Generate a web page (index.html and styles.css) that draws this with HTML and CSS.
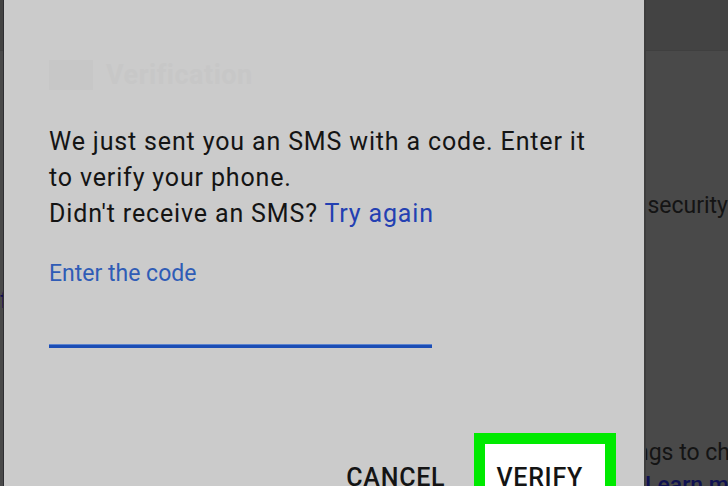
FILE: index.html
```html
<!DOCTYPE html>
<html>
<head>
<meta charset="utf-8">
<link rel="stylesheet" href="styles.css">
</head>
<body>
<div class="screen">
  <div class="bg-page">
    <div class="bg-appbar"></div>
    <div class="bg-content">
      <p class="bg-line bg-l1">Turn on 2-Step Verification to add security</p>
      <p class="bg-line bg-l2 bg-link">Verify</p>
      <p class="bg-line bg-l3">Check your settings to check</p>
      <p class="bg-line bg-l4 bg-link">Learn more</p>
    </div>
  </div>
  <div class="dialog">
    <div class="logo">
      <span class="logo-box"></span>
      <span class="logo-text">Verification</span>
    </div>
    <p class="message">We just sent you an SMS with a code. Enter it to verify your phone.<br>Didn't receive an SMS? <a class="link">Try again</a></p>
    <div class="field">
      <label class="field-label">Enter the code</label>
      <div class="field-line"></div>
    </div>
    <div class="actions">
      <span class="btn">CANCEL</span>
      <span class="btn btn-verify">VERIFY</span>
    </div>
  </div>
</div>
</body>
</html>
```
FILE: styles.css
```css
* { box-sizing: border-box; }
html, body {
  margin: 0;
  padding: 0;
  width: 728px;
  height: 486px;
  overflow: hidden;
  background: #4a4a4a;
  font-family: Roboto, "Liberation Sans", sans-serif;
}
.screen {
  position: relative;
  width: 728px;
  height: 486px;
  overflow: hidden;
}
.bg-page {
  width: 728px;
  height: 486px;
  background: #494949;
  display: flex;
  flex-direction: column;
}
.bg-appbar {
  height: 51px;
  background: #434343;
  border-bottom: 1px solid #3f3f3f;
  flex: none;
}
.bg-content {
  display: flex;
  flex-direction: column;
  padding-top: 141px;
}
.bg-line {
  margin: 0;
  font-size: 23px;
  line-height: 28px;
  color: #141414;
  white-space: nowrap;
}
.bg-l1 { text-align: right; }
.bg-l2 { margin-top: 67px; margin-left: -40px; }
.bg-l3 { margin-top: 124px; margin-left: 472px; }
.bg-l4 { margin-top: 5px; margin-left: 645px; font-weight: 500; }
.bg-link { color: #0f1150; }

.dialog {
  position: absolute;
  left: 3px;
  top: -10px;
  width: 643px;
  height: 520px;
  background: #cbcbcb;
  border-left: 1px solid #2e2e32;
  border-right: 2px solid #3e3e3e;
  padding: 70px 0 0 45px;
  display: flex;
  flex-direction: column;
}
.logo {
  display: flex;
  align-items: center;
  gap: 13px;
  height: 30px;
}
.logo-box {
  width: 44px;
  height: 30px;
  background: #c7c7c7;
}
.logo-text {
  font-size: 27px;
  font-weight: 700;
  color: #c7c7c7;
  letter-spacing: 0.5px;
}
.message {
  margin: 34px 0 0 0;
  width: 556px;
  font-size: 25px;
  line-height: 36px;
  letter-spacing: 0.85px;
  color: #141414;
}
.link {
  color: #2340b2;
}
.field {
  display: flex;
  flex-direction: column;
  margin-top: 29px;
}
.field-label {
  font-size: 23px;
  line-height: 26px;
  color: #2f5cb6;
}
.field-line {
  margin-top: 57px;
  width: 383px;
  height: 4px;
  background: #1b4db5;
  border-top: 1px solid #5c83cf;
}
.actions {
  display: flex;
  justify-content: flex-end;
  align-items: flex-start;
  gap: 29px;
  margin-top: 85px;
  padding-right: 28px;
}
.btn {
  font-size: 25px;
  font-weight: 500;
  line-height: 28px;
  letter-spacing: 0.75px;
  color: #141414;
  margin-top: 31px;
}
.btn-verify {
  margin-top: 0;
  background: #ffffff;
  border: 11px solid #00ea00;
  padding: 20px 22px 20px 11px;
}
```
